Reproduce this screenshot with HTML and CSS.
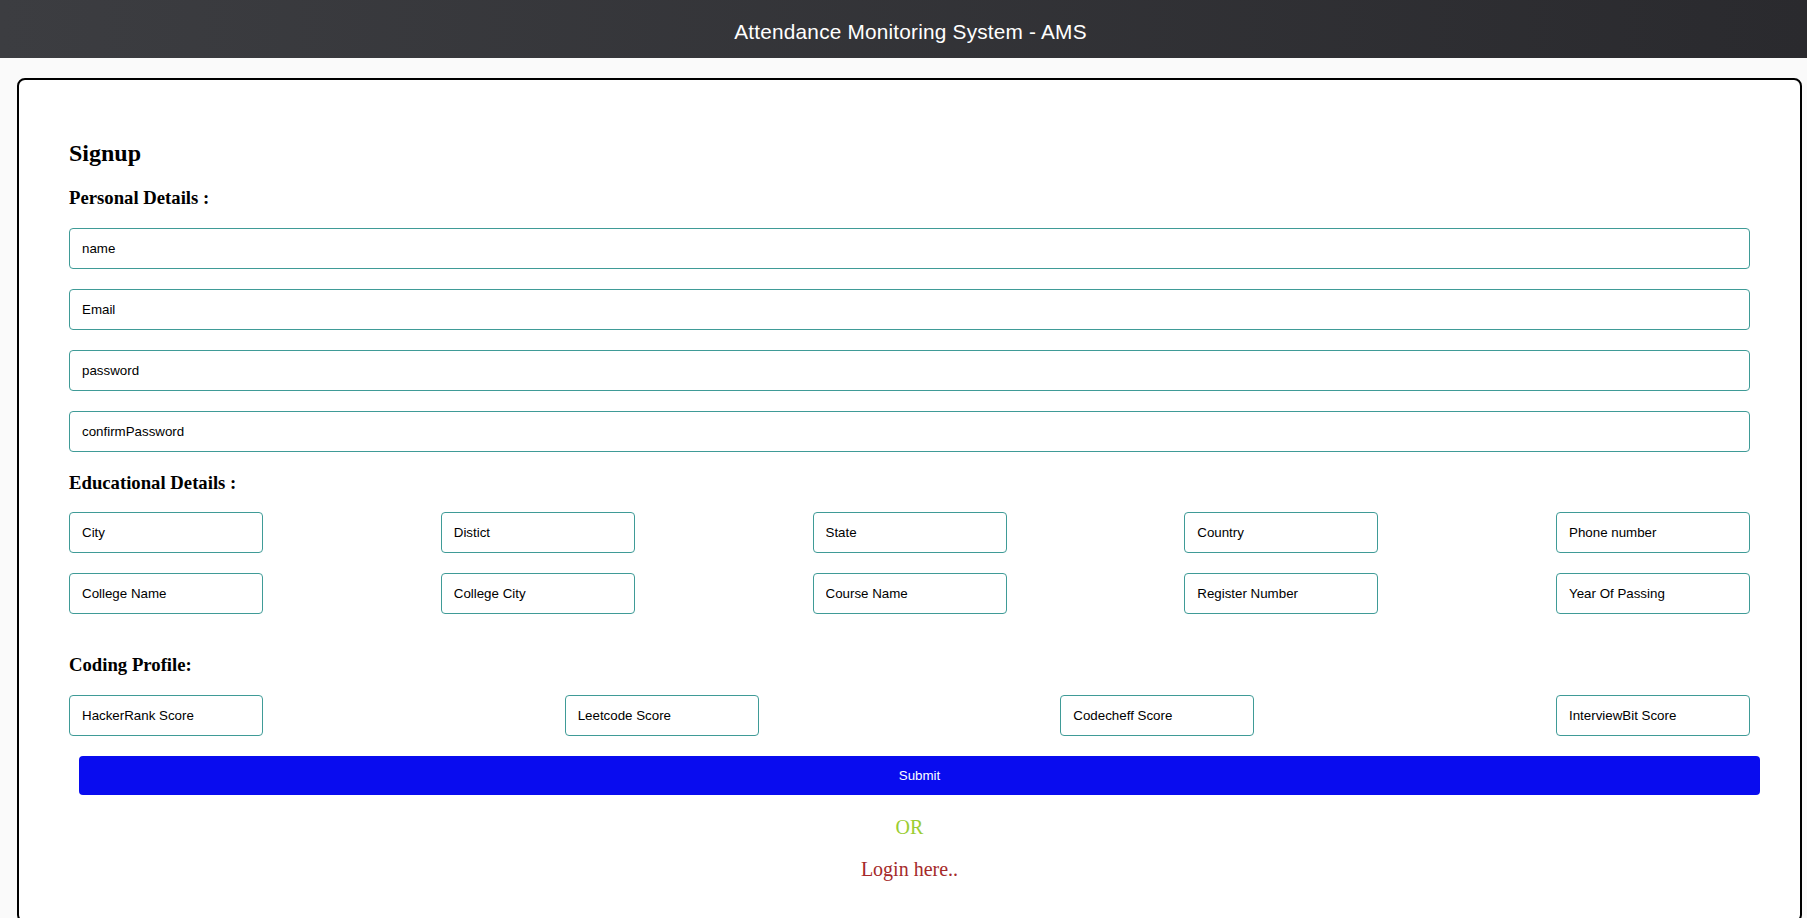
FILE: index.html
```html
<!DOCTYPE html>
<html lang="en">
<head>
<meta charset="utf-8">
<title>Attendance Monitoring System - AMS</title>
<link rel="stylesheet" href="styles.css">
</head>
<body>
<header class="topbar">
  <div class="topbar-title">Attendance Monitoring System - AMS</div>
</header>
<main class="card">
  <form class="signup">
    <h2 class="title">Signup</h2>
    <h3 class="section">Personal Details :</h3>
    <div class="stack">
      <input class="field field-wide" type="text" placeholder="name">
      <input class="field field-wide" type="text" placeholder="Email">
      <input class="field field-wide" type="text" placeholder="password">
      <input class="field field-wide" type="text" placeholder="confirmPassword">
    </div>
    <h3 class="section section-edu">Educational Details :</h3>
    <div class="stack">
      <div class="row">
        <input class="field field-small" type="text" placeholder="City">
        <input class="field field-small" type="text" placeholder="Distict">
        <input class="field field-small" type="text" placeholder="State">
        <input class="field field-small" type="text" placeholder="Country">
        <input class="field field-small" type="text" placeholder="Phone number">
      </div>
      <div class="row">
        <input class="field field-small" type="text" placeholder="College Name">
        <input class="field field-small" type="text" placeholder="College City">
        <input class="field field-small" type="text" placeholder="Course Name">
        <input class="field field-small" type="text" placeholder="Register Number">
        <input class="field field-small" type="text" placeholder="Year Of Passing">
      </div>
    </div>
    <h3 class="section section-code">Coding Profile:</h3>
    <div class="row">
      <input class="field field-small" type="text" placeholder="HackerRank Score">
      <input class="field field-small" type="text" placeholder="Leetcode Score">
      <input class="field field-small" type="text" placeholder="Codecheff Score">
      <input class="field field-small" type="text" placeholder="InterviewBit Score">
    </div>
    <button class="submit" type="button">Submit</button>
    <p class="or">OR</p>
    <p class="login">Login here..</p>
  </form>
</main>
</body>
</html>
```
FILE: styles.css
```css
html, body {
  margin: 0;
  padding: 0;
}

body {
  background: #fafafa;
  font-family: "Liberation Serif", "Times New Roman", serif;
  color: #000;
}

.topbar {
  height: 58px;
  box-sizing: border-box;
  padding-top: 6px;
  display: flex;
  align-items: center;
  justify-content: center;
  background: linear-gradient(to right, #3c3d41, #2a2a2e);
}

.topbar-title {
  color: #fff;
  font-family: "Comic Sans MS", "Liberation Sans", sans-serif;
  font-size: 20.8px;
  line-height: 24px;
  letter-spacing: 0.2px;
  margin-left: 14px;
}

.card {
  margin: 20px 5px 0 17px;
  border: 2px solid #000;
  border-radius: 8px;
  background: #fff;
  padding: 59px 50px 40px 50px;
}

.signup {
  display: flex;
  flex-direction: column;
}

.title {
  margin: 0;
  font-size: 24px;
  line-height: 28px;
  font-weight: bold;
}

.section {
  margin: 20px 0 19px 0;
  font-size: 18.72px;
  line-height: 22px;
  font-weight: bold;
}

.section-edu {
  margin-bottom: 18px;
}

.section-code {
  margin-top: 40px;
}

.stack {
  display: flex;
  flex-direction: column;
  gap: 20px;
}

.row {
  display: flex;
  justify-content: space-between;
}

.field {
  box-sizing: border-box;
  height: 41px;
  margin: 0;
  padding: 0 12px;
  border: 1px solid #3f9b97;
  border-radius: 4px;
  background: #fff;
  font-family: "Liberation Sans", Arial, sans-serif;
  font-size: 13.333px;
  color: #000;
  outline: none;
}

.field::placeholder {
  color: #000;
  opacity: 1;
}

.field-wide {
  width: 100%;
}

.field-small {
  width: 194px;
}

.submit {
  margin: 20px 0 0 10px;
  width: 100%;
  height: 39px;
  border: none;
  border-radius: 4px;
  background: #090cef;
  color: #fff;
  font-family: "Liberation Sans", Arial, sans-serif;
  font-size: 13.333px;
  padding: 0;
}

.or {
  margin: 20px 0 0 0;
  text-align: center;
  font-size: 20px;
  line-height: 24px;
  color: #9acd32;
}

.login {
  margin: 18px 0 0 0;
  text-align: center;
  font-size: 20px;
  line-height: 24px;
  color: #a52a2a;
}
```
